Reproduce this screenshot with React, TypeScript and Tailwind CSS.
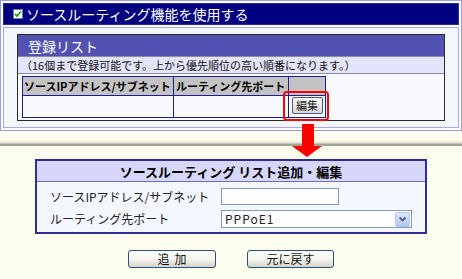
import React from "react";

function Check() {
  return (
    <span className="w-[10px] h-[10px] bg-white border border-[#7a7a9a] flex items-center justify-center">
      <svg width="8" height="8" viewBox="0 0 8 8">
        <path d="M1 4 L3 6 L7 1.5" stroke="#21a121" strokeWidth="1.8" fill="none" />
      </svg>
    </span>
  );
}

function XpButton({ children, w }: { children: React.ReactNode; w: string }) {
  return (
    <div
      className={`${w} h-[18px] rounded-[3px] border border-[#2b4f7e] bg-gradient-to-b from-[#ffffff] via-[#f4f4f0] to-[#d6d3c8] flex items-center justify-center text-[12px] leading-none text-[#111]`}
    >
      {children}
    </div>
  );
}

export default function App() {
  return (
    <div className="w-[462px] h-[279px] bg-[#fdfdef] relative overflow-hidden font-['Noto_Sans_CJK_JP','Noto_Sans',sans-serif] text-black">
      {/* top panel */}
      <div className="h-[131px] border border-[#9c9ce0] p-[2px] bg-white flex flex-col">
        <div className="h-[22px] bg-[#000080] text-white text-[14px] leading-none flex items-center pl-[9px] gap-[3px] border border-[#2a2a9a]">
          <Check />
          <span>ソースルーティング機能を使用する</span>
        </div>
        <div className="mt-[2px] flex-1 border border-[#a8a8e8] bg-[#f4f6fe] pl-[13px] pr-[13px] pt-[6px]">
          <div className="h-[87px] border border-[#2a2a2a] bg-[#f8f8ff] flex flex-col">
            <div className="h-[21px] bg-[#5252b2] text-white text-[14px] leading-none flex items-center pl-[10px]">
              登録リスト
            </div>
            <div className="h-[18px] bg-[#e4e4fc] border-y border-[#8a8aa8] text-[11px] leading-none flex items-center pl-[3px] text-[#111]">
              （16個まで登録可能です。上から優先順位の高い順番になります。）
            </div>
            <div className="pl-[4px] pt-[2px]">
              <div className="w-[304px] border border-[#1c1c8c] grid grid-cols-[151px_115px_36px] text-[11px] font-bold leading-none">
                <div className="h-[19px] bg-[#c3c3c3] border-r border-b border-[#1c1c8c] flex items-center pl-[1px]">
                  ソースIPアドレス/サブネット
                </div>
                <div className="h-[19px] bg-[#c3c3c3] border-r border-b border-[#1c1c8c] flex items-center pl-[2px]">
                  ルーティング先ポート
                </div>
                <div className="h-[19px] bg-[#c3c3c3] border-b border-[#1c1c8c]" />
                <div className="h-[21px] bg-[#f8f8ff] border-r border-[#1c1c8c]" />
                <div className="h-[21px] bg-[#f8f8ff] border-r border-[#1c1c8c]" />
                <div className="h-[21px] bg-[#f8f8ff] flex items-start justify-center pt-[1px]">
                  <div className="w-[31px] h-[17px] rounded-[2px] border border-[#4a5a7a] bg-gradient-to-b from-[#ffffff] to-[#d8d8d8] flex items-center justify-center text-[11px] font-normal text-[#222]">
                    編集
                  </div>
                </div>
              </div>
            </div>
          </div>
        </div>
      </div>

      {/* separator */}
      <div className="mt-[10px] flex flex-col">
        <div className="h-[2px] bg-[#eceadb]" />
        <div className="h-[1px] bg-[#c9c7b3]" />
        <div className="h-[2px] bg-[#a4a290]" />
      </div>

      {/* edit form panel */}
      <div className="ml-[35px] mt-[13px] w-[392px] border-2 border-[#2e2e96] flex flex-col">
        <div className="h-[21px] bg-[#d7d7fc] border-b border-[#6e6ec4] flex items-center justify-center text-[13px] font-bold leading-none">
          ソースルーティング リスト追加・編集
        </div>
        <div className="bg-[#f5f7fe] pl-[13px] pt-[6px] pb-[4px] flex flex-col gap-[5px] text-[12px] leading-none text-[#222]">
          <div className="flex items-center">
            <span className="w-[171px]">ソースIPアドレス/サブネット</span>
            <div className="w-[118px] h-[17px] border border-[#7f9db9] bg-white" />
          </div>
          <div className="flex items-center">
            <span className="w-[171px]">ルーティング先ポート</span>
            <div className="w-[191px] h-[18px] border border-[#7f9db9] bg-white flex items-center justify-between">
              <span className="pl-[3px] text-[12px] tracking-[1px]">PPPoE1</span>
              <span className="w-[15px] h-[15px] mr-[1px] rounded-[2px] bg-gradient-to-b from-[#dfe8fd] to-[#b4c8f6] border border-[#b6c8ee] flex items-center justify-center">
                <svg width="9" height="7" viewBox="0 0 9 7">
                  <path d="M1.5 1.5 L4.5 4.5 L7.5 1.5" stroke="#4d6185" strokeWidth="1.8" fill="none" />
                </svg>
              </span>
            </div>
          </div>
        </div>
      </div>

      {/* buttons */}
      <div className="mt-[16px] pl-[128px] flex gap-[31px]">
        <XpButton w="w-[88px]">
          <span className="flex gap-[5px]">
            <span>追</span>
            <span>加</span>
          </span>
        </XpButton>
        <XpButton w="w-[87px]">元に戻す</XpButton>
      </div>

      {/* red highlight around edit button */}
      <div className="absolute left-[283px] top-[91px] w-[46px] h-[30px] border-2 border-[#ff0000] rounded-[4px]" />

      {/* red arrow */}
      <svg className="absolute left-[292px] top-[124px]" width="30" height="34" viewBox="0 0 30 34">
        <rect x="10" y="0" width="12" height="22" fill="#ff0000" />
        <polygon points="0,22 30,22 15,33" fill="#ff0000" />
      </svg>
    </div>
  );
}
